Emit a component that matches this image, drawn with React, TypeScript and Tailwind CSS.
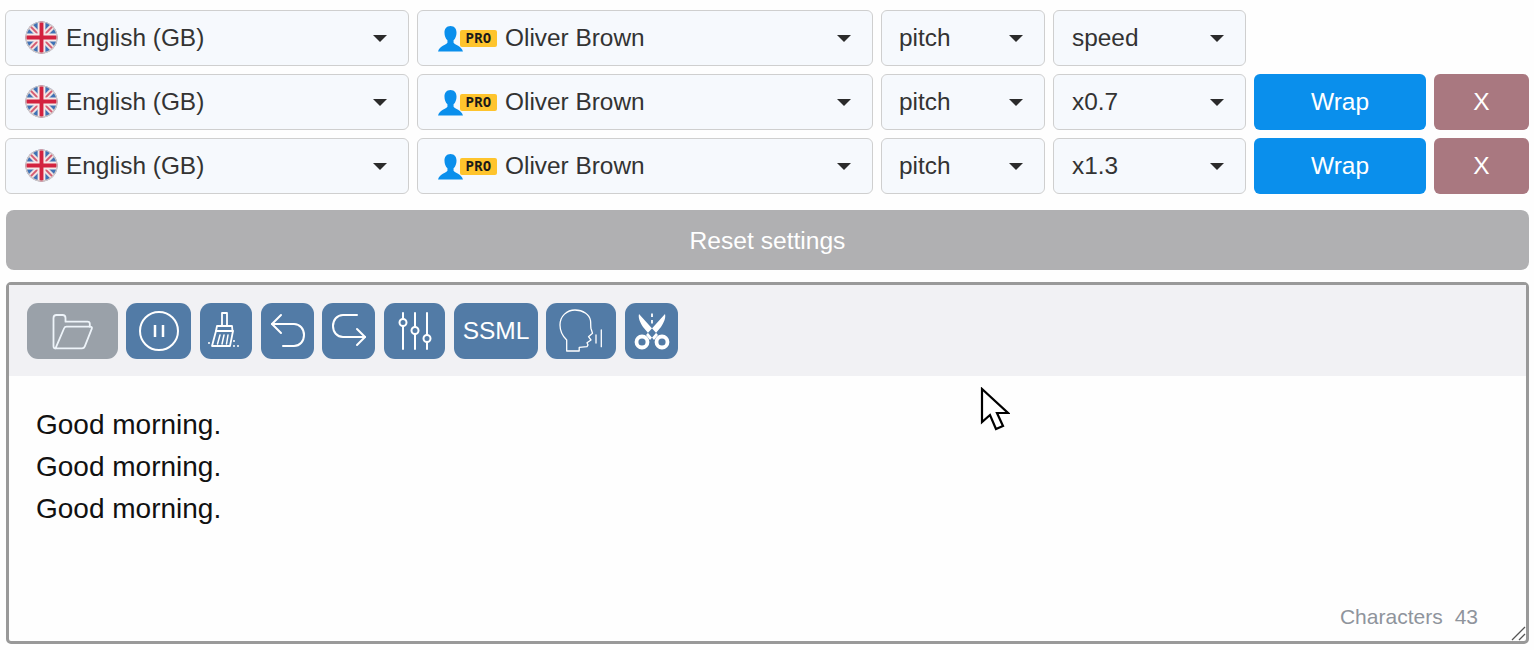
import React from "react";

const Caret = () => (
  <svg width="14" height="7" viewBox="0 0 14 7" className="shrink-0">
    <path d="M0 0h14L7 7z" fill="#2b2b2b" />
  </svg>
);

const Flag = () => (
  <svg width="33" height="33" viewBox="0 0 34 34" className="shrink-0">
    <defs>
      <clipPath id="flagclip">
        <circle cx="17" cy="17" r="16.500" />
      </clipPath>
    </defs>
    <g clipPath="url(#flagclip)">
      <rect width="34" height="34" fill="#3f72b5" />
      <path d="M0 0L34 34M34 0L0 34" stroke="#f1e1e1" strokeWidth="6" />
      <path d="M0 0L34 34M34 0L0 34" stroke="#d65a70" strokeWidth="2" />
      <path d="M17 0V34M0 17H34" stroke="#f5e9e9" strokeWidth="8" />
      <path d="M17 0V34M0 17H34" stroke="#d3223f" strokeWidth="4" />
    </g>
    <circle cx="17" cy="17" r="16" fill="none" stroke="#cfc6c6" strokeWidth="1.200" />
  </svg>
);

const Person = () => (
  <svg width="25" height="26" viewBox="0 0 27 28" className="shrink-0 mt-[2px]">
    <path
      d="M13.500 0C9.300 0 7 3 7 7.200c0 3.300 1.300 6.400 3.200 8.200v2.600c-1.400 2.300-8.300 3.300-10.200 9.500h27c-1.900-6.200-8.800-7.200-10.200-9.500v-2.600C18.700 13.600 20 10.500 20 7.200 20 3 17.700 0 13.500 0z"
      fill="#0a8fec"
    />
  </svg>
);

const Box = ({ w, children }: { w: string; children: React.ReactNode }) => (
  <div className={`${w} h-14 shrink-0 flex items-center justify-between rounded-md border border-[#cfcfcf] bg-[#f6f9fd] text-[#333] text-[24.400px]`}>
    {children}
  </div>
);

const Row = ({ speed, actions }: { speed: string; actions: boolean }) => (
  <div className="flex gap-2 h-14">
    <Box w="w-[404px]">
      <div className="flex items-center gap-2 pl-[19px]">
        <Flag />
        <span>English (GB)</span>
      </div>
      <div className="pr-[21px] flex"><Caret /></div>
    </Box>
    <Box w="w-[456px]">
      <div className="flex items-center pl-[20px]">
        <Person />
        <span className="-ml-[3px] mt-[1px] w-[37px] h-[17px] rounded-[2px] bg-[#fec42d] text-[#1a1a1a] text-[14px] leading-[17px] font-bold text-center font-['DejaVu_Sans_Mono'] tracking-[0.300px] relative z-10">PRO</span>
        <span className="ml-2">Oliver Brown</span>
      </div>
      <div className="pr-[21px] flex"><Caret /></div>
    </Box>
    <Box w="w-[164px]">
      <span className="pl-[17px]">pitch</span>
      <div className="pr-[21px] flex"><Caret /></div>
    </Box>
    <Box w="w-[193px]">
      <span className="pl-[18px]">{speed}</span>
      <div className="pr-[21px] flex"><Caret /></div>
    </Box>
    {actions && (
      <>
        <button className="w-[172px] h-14 rounded-md bg-[#0a8fec] text-white text-[24.500px]">Wrap</button>
        <button className="w-[95px] h-14 rounded-md bg-[#a97880] text-white text-[24.500px]">X</button>
      </>
    )}
  </div>
);

const Tool = ({ w, grey, children }: { w: string; grey?: boolean; children: React.ReactNode }) => (
  <div className={`${w} h-14 shrink-0 flex items-center justify-center rounded-[11px] text-white ${grey ? "bg-[#9aa1a9]" : "bg-[#527ba6]"}`}>
    {children}
  </div>
);

const stroke = { fill: "none", stroke: "#fff", strokeLinecap: "round" as const, strokeLinejoin: "round" as const };

export default function App() {
  return (
    <div className="w-[1534px] h-[650px] bg-[#fefefe] pt-[10px] pl-[5px] overflow-hidden font-['Liberation_Sans',Arial,sans-serif] relative">
      <div className="flex flex-col gap-2">
        <Row speed="speed" actions={false} />
        <Row speed="x0.7" actions />
        <Row speed="x1.3" actions />
      </div>

      <button className="mt-4 ml-px block w-[1523px] h-[60px] pt-[2px] rounded-lg bg-[#b0b0b2] text-white text-[24.600px]">
        Reset settings
      </button>

      <div className="mt-3 ml-px w-[1523px] h-[362px] rounded-[5px] border-[3px] border-[#999] bg-[#fefefe] relative">
        <div className="h-[91px] bg-[#f1f1f4] pl-[18px] pt-[18px] flex gap-2">
          <Tool w="w-[91px]" grey>
            <svg width="42" height="38" viewBox="0 0 42 38" {...stroke} strokeWidth="1.800" stroke="#eef4fa">
              <path d="M3.500 36.300H3c-1 0-1.500-.8-1.500-2V6c0-2 1-3 3-3h6c2 0 3 1.200 3 3v3.700h22c1.500 0 2.300.8 2.300 2v3" />
              <path d="M3.500 36.300L12 16.500c.5-1.200 1-1.800 2.500-1.800H38c1.500 0 2.300.6 1.800 2l-7 17.600c-.5 1.300-1.300 2-2.800 2z" />
            </svg>
          </Tool>
          <Tool w="w-[65px]">
            <svg width="40" height="40" viewBox="0 0 40 40" {...stroke} strokeWidth="2">
              <circle cx="20" cy="20" r="19" />
              <path d="M16 14v12M24 14v12" strokeWidth="2.500" strokeLinecap="butt" />
            </svg>
          </Tool>
          <div className="ml-px">
            <Tool w="w-[52px]">
              <svg width="36" height="38" viewBox="0 0 36 38" {...stroke} strokeWidth="1.500">
                <path d="M14 1h5v13h-5z" strokeWidth="1.800" />
                <path d="M9 14h15l.5 5H8z" strokeWidth="1.800" />
                <path d="M8 19L4 34h18l3-15" strokeWidth="1.800" />
                <path d="M12 23l-2.500 9M16 23l-2 9M20 23l-1.500 9" />
                <path d="M1 31v.1M26 29v.1M30 34v.1M26 34v.1" strokeWidth="2" />
              </svg>
            </Tool>
          </div>
          <div className="ml-px">
            <Tool w="w-[53px]">
              <svg width="36" height="36" viewBox="0 0 36 36" {...stroke} strokeWidth="2">
                <path d="M11 2L2 11l9 9" />
                <path d="M2 11h22c6 0 10 5 10 11s-4 11-10 11H13" />
              </svg>
            </Tool>
          </div>
          <Tool w="w-[53px]">
            <svg width="36" height="36" viewBox="0 0 36 36" {...stroke} strokeWidth="2">
              <path d="M26 2H12C6 2 2 7 2 13s4 11 10 11h22" />
              <path d="M26 16l8 8-8 8" />
            </svg>
          </Tool>
          <div className="ml-px">
            <Tool w="w-[61px]">
              <svg width="36" height="38" viewBox="0 0 36 38" {...stroke} strokeWidth="2">
                <path d="M6 1v6M6 14v23M18 1v14M18 22v15M30 1v22M30 30v7" />
                <circle cx="6" cy="10.500" r="3.500" />
                <circle cx="18" cy="18.500" r="3.500" />
                <circle cx="30" cy="26.500" r="3.500" />
              </svg>
            </Tool>
          </div>
          <div className="ml-px">
            <Tool w="w-[84px]">
              <span className="text-[24.500px]">SSML</span>
            </Tool>
          </div>
          <Tool w="w-[70px]">
            <svg width="46" height="44" viewBox="0 0 46 44" {...stroke} strokeWidth="1.300">
              <path d="M8.700 42V31C4.500 27 2 22 2 16 2 7 9 1 17 1c8 0 14.500 4.500 15.500 10.500.4 2.500 0 5.500.5 8l1.500 4.800-4 3.400 2.500 3.300-4 2.700 1 2.300-1 1.700-7.800.7V42z" />
              <path d="M38 26v8" />
              <path d="M43.300 21v16.700" />
            </svg>
          </Tool>
          <div className="ml-px">
            <Tool w="w-[53px]">
              <svg width="36" height="40" viewBox="0 0 36 40" fill="none" stroke="#fff" strokeWidth="2.500">
                <path d="M5 3L24 24l-4 5L9 16C6 11 4 7 5 3zM31 3L12 24l4 5L27 16c3-5 5-9 4-13z" fill="#fff" stroke="none" />
                <path d="M18 2.500V6M18 9v3.500" strokeWidth="1.800" />
                <circle cx="8" cy="31" r="5.500" strokeWidth="3.800" />
                <circle cx="28" cy="31" r="5.500" strokeWidth="3.800" />
              </svg>
            </Tool>
          </div>
        </div>

        <div className="pt-[28px] pl-[27px] text-[28px] leading-[42px] text-[#111]">
          <div>Good morning.</div>
          <div>Good morning.</div>
          <div>Good morning.</div>
        </div>

        <div className="absolute right-[48px] bottom-[9px] text-[21px] text-[#8f949c] flex gap-3">
          <span>Characters</span>
          <span>43</span>
        </div>

        <svg width="16" height="16" viewBox="0 0 16 16" className="absolute right-0 bottom-0" stroke="#555" strokeWidth="1.300">
          <path d="M2 15L15 2M9 15l6-6" />
        </svg>
      </div>

      <svg width="30" height="44" viewBox="0 0 30 44" className="absolute left-[980px] top-[387px]">
        <path d="M2 2v33l8-7 6 14 7-3-6-13h11z" fill="#fff" stroke="#000" strokeWidth="2.200" strokeLinejoin="miter" />
      </svg>
    </div>
  );
}
